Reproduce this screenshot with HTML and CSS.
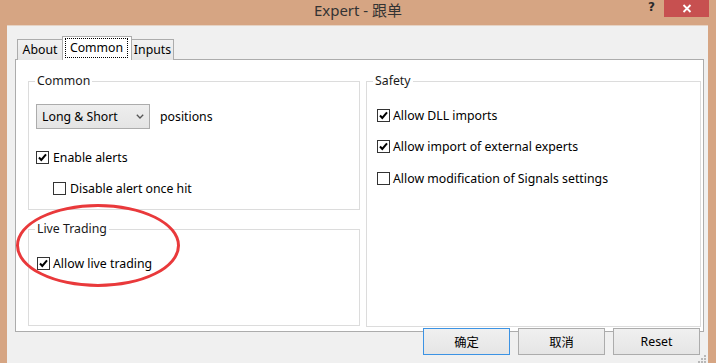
FILE: index.html
```html
<!DOCTYPE html>
<html lang="en">
<head>
<meta charset="utf-8">
<title>Expert - 跟单</title>
<link rel="stylesheet" href="styles.css">
</head>
<body>
<div class="window">
  <header class="titlebar">
    <div class="spacer"></div>
    <div class="title">Expert - 跟单</div>
    <div class="controls">
      <span class="help">?</span>
      <span class="close"><svg width="10" height="9" viewBox="0 0 10 9"><path d="M1.5 1 L8.5 8 M8.5 1 L1.5 8" stroke="#fff" stroke-width="1.8" fill="none"/></svg></span>
    </div>
  </header>
  <main class="client">
    <div class="tabs">
      <div class="tab tab-about">About</div>
      <div class="tab tab-common active"><span class="focus">Common</span></div>
      <div class="tab tab-inputs">Inputs</div>
    </div>
    <div class="panel">
      <div class="col-left">
        <fieldset class="group g-common">
          <legend>Common</legend>
          <div class="select-row">
            <div class="select">
              <span>Long &amp; Short</span>
              <svg class="chev" width="8" height="5" viewBox="0 0 8 5"><path d="M0.8 0.8 L4 4 L7.2 0.8" stroke="#555" stroke-width="1.3" fill="none"/></svg>
            </div>
            <span class="positions">positions</span>
          </div>
          <div class="check c-enable"><span class="box"><svg width="11" height="11" viewBox="0 0 11 11"><path d="M2 5.5 L4.3 8 L9 2.3" stroke="#000" stroke-width="2" fill="none"/></svg></span><span>Enable alerts</span></div>
          <div class="check c-disable"><span class="box"></span><span>Disable alert once hit</span></div>
        </fieldset>
        <fieldset class="group g-live">
          <legend>Live Trading</legend>
          <div class="check c-live"><span class="box"><svg width="11" height="11" viewBox="0 0 11 11"><path d="M2 5.5 L4.3 8 L9 2.3" stroke="#000" stroke-width="2" fill="none"/></svg></span><span>Allow live trading</span></div>
        </fieldset>
      </div>
      <fieldset class="group g-safety">
        <legend>Safety</legend>
        <div class="check c-dll"><span class="box"><svg width="11" height="11" viewBox="0 0 11 11"><path d="M2 5.5 L4.3 8 L9 2.3" stroke="#000" stroke-width="2" fill="none"/></svg></span><span>Allow DLL imports</span></div>
        <div class="check c-ext"><span class="box"><svg width="11" height="11" viewBox="0 0 11 11"><path d="M2 5.5 L4.3 8 L9 2.3" stroke="#000" stroke-width="2" fill="none"/></svg></span><span>Allow import of external experts</span></div>
        <div class="check c-sig"><span class="box"></span><span>Allow modification of Signals settings</span></div>
      </fieldset>
    </div>
    <div class="buttons">
      <div class="btn default">确定</div>
      <div class="btn">取消</div>
      <div class="btn">Reset</div>
    </div>
    <svg class="grip" width="9" height="9" viewBox="0 0 9 9">
      <rect x="6" y="0" width="2" height="2" fill="#b8b8b8"/>
      <rect x="3" y="3" width="2" height="2" fill="#b8b8b8"/>
      <rect x="6" y="3" width="2" height="2" fill="#b8b8b8"/>
      <rect x="0" y="6" width="2" height="2" fill="#b8b8b8"/>
      <rect x="3" y="6" width="2" height="2" fill="#b8b8b8"/>
      <rect x="6" y="6" width="2" height="2" fill="#b8b8b8"/>
    </svg>
    <div class="annotation"></div>
  </main>
</div>
</body>
</html>
```
FILE: styles.css
```css
* { box-sizing: border-box; }

body {
  margin: 0;
  width: 716px;
  height: 363px;
  overflow: hidden;
  background: #d6a583;
  font-family: "Noto Sans", "Noto Sans CJK SC", sans-serif;
  font-size: 12.3px;
  color: #000;
}

.window {
  height: 363px;
  display: flex;
  flex-direction: column;
}

.titlebar {
  height: 25px;
  flex: none;
  display: grid;
  grid-template-columns: 1fr auto 1fr;
  align-items: start;
}

.title {
  font-family: "Noto Sans", "Noto Sans CJK SC", sans-serif;
  font-size: 15px;
  line-height: 21px;
  color: #333;
}

.controls {
  justify-self: end;
  display: flex;
  align-items: flex-start;
  margin-right: 7px;
}

.help {
  font-family: "DejaVu Sans", sans-serif;
  font-weight: bold;
  font-size: 12px;
  line-height: 15px;
  color: #2a2a2a;
  margin-right: 9px;
}

.close {
  width: 45px;
  height: 17px;
  background: #c75050;
  display: flex;
  align-items: center;
  justify-content: center;
}

.client {
  flex: 1;
  margin: 0 8px 0 7px;
  background: #f0f0f0;
  border-top: 1px solid #e6d3c4;
  padding: 10px 4px 0 8px;
  display: flex;
  flex-direction: column;
  position: relative;
}

.tabs {
  display: flex;
  align-items: flex-end;
  margin-left: 2px;
  height: 24px;
  margin-bottom: -1px;
  position: relative;
  z-index: 1;
}

.tab {
  height: 21px;
  border: 1px solid #acacac;
  border-bottom: none;
  background: linear-gradient(#f2f2f2, #e6e6e6);
  line-height: 19px;
  text-align: center;
}

.tab-about { width: 46px; }
.tab-inputs { width: 43px; margin-left: -1px; }

.tab-common {
  width: 70px;
  height: 24px;
  margin-left: -1px;
  background: #fff;
  padding: 1px 3px 2px 2px;
}

.focus {
  display: block;
  height: 20px;
  border: 1px dotted #000;
  line-height: 17px;
  text-align: center;
}

.panel {
  height: 273px;
  border: 1px solid #acacac;
  background: #fff;
  padding: 13px 2px 4px 12px;
  display: grid;
  grid-template-columns: 332px 1fr;
  column-gap: 6px;
}

.col-left {
  display: flex;
  flex-direction: column;
}

.group {
  margin: 0;
  padding: 0;
  min-width: 0;
  border: 1px solid #dcdcdc;
}

.group legend {
  margin-left: 6px;
  padding: 0 2px;
  line-height: 16px;
  color: #1a1a1a;
}

.g-common {
  padding-bottom: 13px;
}

.g-live {
  margin-top: 11px;
  flex: 1;
  margin-bottom: 1px;
}

.select-row {
  display: flex;
  align-items: center;
  margin: 15px 0 0 7px;
}

.select {
  width: 114px;
  height: 25px;
  border: 1px solid #acacac;
  background: linear-gradient(#eeeeee, #e4e4e4);
  display: flex;
  align-items: center;
  justify-content: space-between;
  padding: 0 3px 0 5px;
}

.chev { margin-right: 2px; }

.positions {
  margin-left: 10px;
}

.check {
  display: flex;
  align-items: center;
  height: 16px;
  gap: 3px;
}

.box {
  width: 13px;
  height: 13px;
  flex: none;
  border: 1px solid #333;
  background: #fff;
  display: flex;
  align-items: center;
  justify-content: center;
}

.c-enable { margin: 20px 0 0 7px; gap: 4px; }
.c-disable { margin: 15px 0 0 24px; gap: 4px; }
.c-live { margin: 18px 0 0 8px; }
.c-dll { margin: 18px 0 0 10px; }
.c-ext { margin: 15px 0 0 10px; }
.c-sig { margin: 16px 0 0 10px; }

.buttons {
  display: flex;
  justify-content: flex-end;
  gap: 8px;
  margin-top: -4px;
  margin-right: 4px;
  position: relative;
  z-index: 1;
}

.btn {
  width: 87px;
  height: 27px;
  border: 1px solid #acacac;
  background: linear-gradient(#f0f0f0, #e5e5e5);
  display: flex;
  align-items: center;
  justify-content: center;
  font-family: "Noto Sans", "Noto Sans CJK SC", sans-serif;
}

.btn.default {
  border-color: #3c93e4;
}

.grip {
  position: absolute;
  right: 1px;
  bottom: -1px;
}

.annotation {
  position: absolute;
  left: 9px;
  top: 178px;
  width: 164px;
  height: 83px;
  border: 3px solid #e9393b;
  border-radius: 50%;
  z-index: 2;
}
```
